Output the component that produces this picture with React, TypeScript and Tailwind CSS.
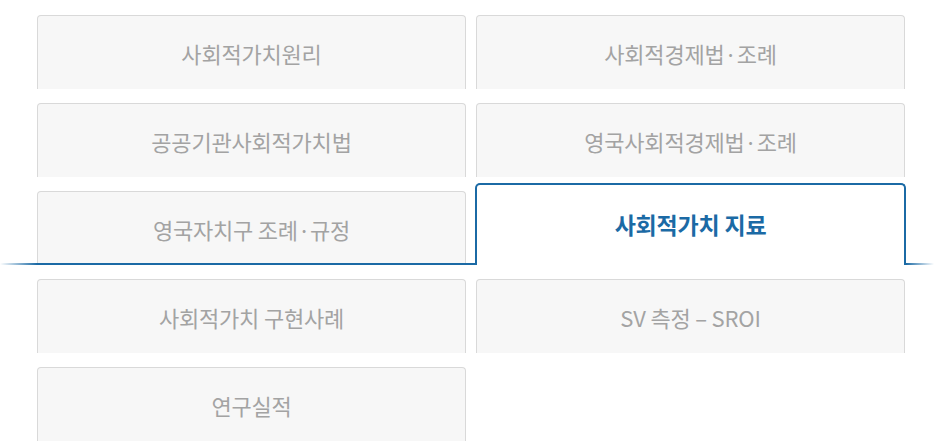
import React from "react";

const BLUE = "#1b6aa5";

function Tab({ label }: { label: string }) {
  return (
    <div className="h-[74px] w-[429px] rounded-t-[4px] border border-b-0 border-[#d9d9d9] bg-[#f7f7f7] flex items-center justify-center pt-[2px]">
      <span className="text-[22px] text-[#a3a3a3] tracking-[-0.2px]">{label}</span>
    </div>
  );
}

export default function App() {
  return (
    <div
      className="w-[941px] h-[448px] bg-white overflow-hidden pt-[15px]"
      style={{ fontFamily: '"Noto Sans CJK KR", "Noto Sans", sans-serif' }}
    >
      <div className="flex flex-col">
        <div className="flex gap-[10px] pl-[37px]">
          <Tab label="사회적가치원리" />
          <Tab label="사회적경제법·조례" />
        </div>
        <div className="flex gap-[10px] pl-[37px] mt-[14px]">
          <Tab label="공공기관사회적가치법" />
          <Tab label="영국사회적경제법·조례" />
        </div>
        <div className="flex items-end h-[82px] mt-[6px]">
          <div className="w-[37px] h-[2px] bg-linear-to-r from-[#1b6aa5]/0 to-[#1b6aa5]" />
          <div className="w-[429px] flex flex-col">
            <div className="h-[72px] w-[429px] rounded-t-[4px] border border-b-0 border-[#d9d9d9] bg-[#f7f7f7] flex items-center justify-center pt-[4px]">
              <span className="text-[22px] text-[#a3a3a3] tracking-[-0.2px]">영국자치구 조례·규정</span>
            </div>
            <div className="h-[2px] bg-[#1b6aa5]" />
          </div>
          <div className="w-[9px] h-[2px] bg-[#1b6aa5]" />
          <div className="w-[431px] h-[82px] rounded-t-[5px] border-2 border-b-0 border-[#1b6aa5] bg-white flex items-center justify-center pb-[2px]">
            <span className="text-[23px] font-bold tracking-[-0.2px]" style={{ color: BLUE }}>
              사회적가치 지료
            </span>
          </div>
          <div className="w-[28px] h-[2px] bg-linear-to-r from-[#1b6aa5] to-[#1b6aa5]/0" />
        </div>
        <div className="flex gap-[10px] pl-[37px] mt-[14px]">
          <Tab label="사회적가치 구현사례" />
          <Tab label="SV 측정 – SROI" />
        </div>
        <div className="flex gap-[10px] pl-[37px] mt-[14px]">
          <Tab label="연구실적" />
        </div>
      </div>
    </div>
  );
}
